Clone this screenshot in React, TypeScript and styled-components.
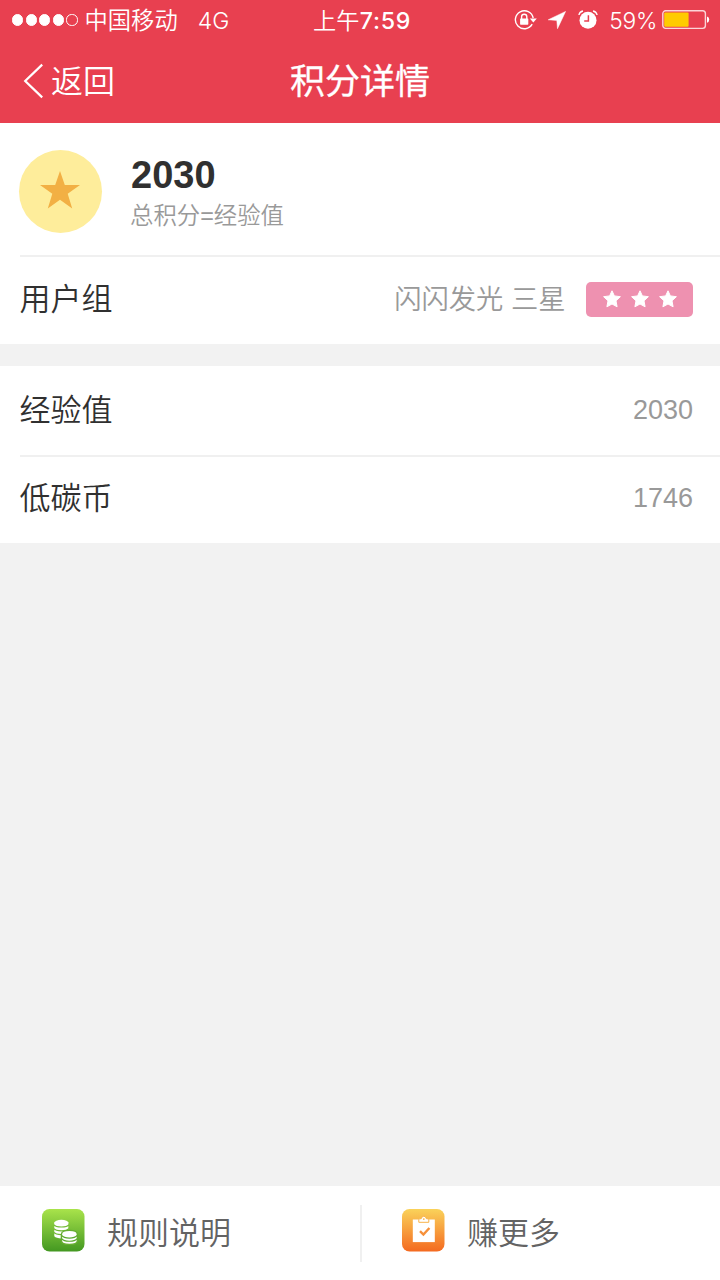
import React from 'react';
import styled, { createGlobalStyle } from 'styled-components';

const GlobalStyle = createGlobalStyle`
  * { box-sizing: border-box; }
  body {
    margin: 0;
    background: #f2f2f2;
    font-family: "Liberation Sans", "Noto Sans CJK SC", sans-serif;
  }
`;

const Screen = styled.main`
  display: flex;
  flex-direction: column;
  width: 720px;
  height: 1280px;
  background: #f2f2f2;
  overflow: hidden;
`;

const Header = styled.header`
  height: 123px;
  background: #e84050;
  color: #fff;
`;

const StatusBar = styled.div`
  display: grid;
  grid-template-columns: 1fr auto 1fr;
  align-items: center;
  height: 40px;
  padding: 0 10px 0 12px;
  font-family: Inter, "Noto Sans CJK SC", sans-serif;
  font-size: 22px;
  line-height: 38px;
`;

const Carrier = styled.div`
  display: flex;
  align-items: center;
  font-weight: 350;
`;

const Signal = styled.div`
  display: flex;
  flex: none;
  gap: 2.4px;
  margin-right: 7px;
`;

const Dot = styled.i<{ $empty?: boolean }>`
  flex: none;
  width: 11.2px;
  height: 11.2px;
  border: 1px solid #fff;
  border-radius: 50%;
  background: ${p => (p.$empty ? 'transparent' : '#fff')};
`;

const CarrierName = styled.span`
  font-size: 23.3px;
  margin-right: 20px;
  padding-top: 1px;
`;

const Network = styled.span`
  font-size: 23px;
  font-weight: 350;
  padding-top: 1px;
`;

const Clock = styled.time`
  display: flex;
  padding: 1px 0 0 2px;
  font-size: 23.2px;
  font-weight: 500;
  letter-spacing: 0.7px;
`;

const Meridiem = styled.span`
  font-weight: 350;
  letter-spacing: 0.2px;
`;

const Indicators = styled.div`
  display: flex;
  align-items: center;
  justify-content: flex-end;
`;

const Percent = styled.span`
  margin: 0 5px 0 11px;
  padding-top: 1px;
  font-size: 22.8px;
  font-weight: 350;
  letter-spacing: -0.3px;
`;

const NavBar = styled.nav`
  display: grid;
  grid-template-columns: 1fr auto 1fr;
  align-items: center;
  height: 82px;
  padding: 0 23px;
`;

const BackButton = styled.a`
  display: flex;
  align-items: center;
  gap: 7px;
  font-size: 32px;
  font-weight: 350;
  line-height: 40px;
`;

const BackText = styled.span`
  padding-top: 2px;
`;

const Title = styled.h1`
  margin: 0;
  padding-top: 2px;
  font-size: 35px;
  font-weight: 400;
  line-height: 40px;
  -webkit-text-stroke: 0.3px #fff;
`;

const Card = styled.section`
  padding-left: 20px;
  background: #fff;
  & + & { margin-top: 22px; }
`;

const Summary = styled.div`
  display: flex;
  align-items: center;
  gap: 29px;
  height: 134px;
  padding-top: 4px;
  border-bottom: 2px solid #f0f0f0;
`;

const Medal = styled.div`
  display: flex;
  align-items: center;
  justify-content: center;
  width: 83px;
  height: 83px;
  margin-left: -1px;
  padding: 0 0.5px 3px 0;
  border-radius: 50%;
  background: #feed9b;
`;

const Figures = styled.div`
  padding-top: 9px;
`;

const Total = styled.strong`
  display: block;
  color: #303030;
  font-size: 38px;
  line-height: 42px;
`;

const Caption = styled.div`
  margin-left: -1px;
  color: #999;
  font-size: 23.4px;
  font-weight: 350;
  line-height: 41px;
`;

const Row = styled.div<{ $height: number; $lift: number; $divided?: boolean }>`
  display: flex;
  align-items: center;
  justify-content: space-between;
  height: ${p => p.$height}px;
  padding: 0 27px ${p => p.$lift}px 0;
  border-bottom: ${p => (p.$divided ? '2px solid #f0f0f0' : 'none')};
`;

const Label = styled.span`
  margin-left: -0.5px;
  padding-top: 2px;
  color: #303030;
  font-size: 31px;
  font-weight: 350;
  line-height: 40px;
`;

const Value = styled.span`
  color: #999;
  font-size: 27px;
  font-weight: 350;
  line-height: 40px;
`;

const GroupName = styled(Value)`
  padding-top: 1px;
  font-size: 27.3px;
`;

const Group = styled.div`
  display: flex;
  align-items: center;
  gap: 20px;
`;

const Level = styled.div`
  display: flex;
  align-items: center;
  justify-content: center;
  gap: 8px;
  width: 107.5px;
  height: 35px;
  padding-left: 1px;
  border-radius: 5px;
  background: #ee91b0;
`;

const Footer = styled.footer`
  display: flex;
  height: 94px;
  margin-top: auto;
  background: #fff;
`;

const Action = styled.a`
  display: flex;
  flex: 1;
  align-items: center;
  gap: 22px;
  padding: 0 0 6px 42px;
  color: #636363;
  font-size: 31px;
  font-weight: 350;
  line-height: 40px;
`;

const ActionText = styled.span`
  padding-top: 8px;
`;

const Divider = styled.div`
  width: 2px;
  height: 57px;
  margin: 19px -2px 0 0;
  background: #f0f0f0;
`;

const Star = ({ size, color }: { size: number; color: string }) => (
  <svg width={size} height={size} viewBox="0 0 40 40" fill={color}>
    <path d="M20 1l4.8 14H40L27.7 23.8 32.2 38.5 20 29.8 7.8 38.5l4.5-14.7L0 15h15.2z" />
  </svg>
);

const RoundStar = () => (
  <svg width="20" height="20" viewBox="0 0 20 20" fill="#fff" stroke="#fff" strokeWidth="1" strokeLinejoin="round">
    <path d="M10 1.8l2.4 5.1 6 .8-4.4 4.1 1.1 6L10 15l-5.1 2.8 1.1-6-4.4-4.1 6-.8z" />
  </svg>
);

const RotationLock = () => (
  <svg width="24" height="20" viewBox="0 0 24 20" fill="none" stroke="#fff">
    <path d="M18.2 14.2A9 9 0 1 1 19.2 8" strokeWidth="1.4" />
    <path d="M15.8 8.6h7l-3.5 4z" fill="#fff" stroke="none" />
    <path d="M7.6 9V6.8a2.6 2.6 0 0 1 5.2 0V9" strokeWidth="1.4" />
    <rect x="6.1" y="8.5" width="8.2" height="6.2" rx=".6" fill="#fff" stroke="none" />
  </svg>
);

const LocationIcon = styled.svg`
  margin-left: 10px;
`;

const LocationArrow = () => (
  <LocationIcon width="18" height="18" viewBox="0 0 18 18" fill="#fff">
    <path d="M17.6.4L.2 8.8l8.6.6.7 8.3z" stroke="#fff" strokeWidth=".5" />
  </LocationIcon>
);

const AlarmIcon = styled.svg`
  margin-left: 12px;
`;

const Alarm = () => (
  <AlarmIcon width="20" height="20" viewBox="0 0 20 20" fill="none" stroke="#fff">
    <circle cx="10" cy="10.3" r="8.5" fill="#fff" stroke="none" />
    <path d="M.9 5Q1.5 1.8 5 1M19.1 5Q18.5 1.8 15 1" strokeWidth="1.3" />
    <path d="M10.4 5.2v5.7H6.2" stroke="#e84050" strokeWidth="1.5" />
  </AlarmIcon>
);

const Battery = () => (
  <svg width="48" height="20" viewBox="0 0 48 20" fill="none">
    <rect x=".8" y=".8" width="42.6" height="17.6" rx="2.8" stroke="#fbd5d8" strokeWidth="1.4" />
    <rect x="2.2" y="2.4" width="24.4" height="14.4" rx="1" fill="#ffcb00" />
    <path d="M45 6.5q2.2.5 2.2 3.1T45 12.8z" fill="#fff" />
  </svg>
);

const BackArrow = () => (
  <svg width="21" height="36" viewBox="0 0 21 36" fill="none" stroke="#fff" strokeWidth="2.2">
    <path d="M19.2 1.6L2.2 18l17 16.4" />
  </svg>
);

const CoinsIcon = () => (
  <svg width="43" height="43" viewBox="0 0 43 43">
    <defs>
      <linearGradient id="green" x2="0" y2="1">
        <stop stopColor="#a9e34b" />
        <stop offset="1" stopColor="#439821" />
      </linearGradient>
    </defs>
    <rect width="42.5" height="42.5" rx="7.5" fill="url(#green)" />
    <path d="M12.3 13.5v13.8q2 2.1 7.2 2.1 6.8 0 6.8-2.1V13.5z" fill="#fff" />
    <ellipse cx="19.4" cy="13.8" rx="7.1" ry="3" fill="#fff" />
    <path d="M12 15.8q1.5 2.2 7.4 2.2t7.4-2.2M12 19.6q1.5 2.2 7.4 2.2t7.4-2.2M12 23.4q1.5 2.2 7.4 2.2t7.4-2.2" fill="none" stroke="#72ba35" strokeWidth="1.2" />
    <path d="M19.4 25.4q0-4 8-4t8 4v6q0 4-8 4t-8-4z" fill="#fff" stroke="#66ad31" strokeWidth="1.4" />
    <path d="M19.6 26.4q2 2.7 7.8 2.7t7.8-2.7M19.6 29.6q2 2.7 7.8 2.7t7.8-2.7" fill="none" stroke="#5ba92d" strokeWidth="1.1" />
  </svg>
);

const TaskIcon = () => (
  <svg width="43" height="43" viewBox="0 0 43 43">
    <defs>
      <linearGradient id="orange" x2="0" y2="1">
        <stop stopColor="#fad25a" />
        <stop offset="1" stopColor="#f46a20" />
      </linearGradient>
    </defs>
    <rect width="42.5" height="42.5" rx="7.5" fill="url(#orange)" />
    <rect x="10.8" y="10.5" width="22" height="22.6" fill="#fff" />
    <path d="M16.8 13.3v-2.6q.2-1.1 2.5-1.1.4-2.4 2.5-2.4t2.5 2.4q2.3 0 2.5 1.1v2.6z" fill="#fff" stroke="#f8b34a" strokeWidth="1" />
    <circle cx="21.8" cy="10.1" r=".9" fill="#f8b34a" />
    <path d="M18 22.2l3.4 3.3 6-6.5" fill="none" stroke="#f6903a" strokeWidth="2.4" />
  </svg>
);

export default function App() {
  return (
    <Screen>
      <GlobalStyle />
      <Header>
        <StatusBar>
          <Carrier>
            <Signal>
              <Dot /><Dot /><Dot /><Dot /><Dot $empty />
            </Signal>
            <CarrierName>中国移动</CarrierName>
            <Network>4G</Network>
          </Carrier>
          <Clock><Meridiem>上午</Meridiem>7:59</Clock>
          <Indicators>
            <RotationLock />
            <LocationArrow />
            <Alarm />
            <Percent>59%</Percent>
            <Battery />
          </Indicators>
        </StatusBar>
        <NavBar>
          <BackButton><BackArrow /><BackText>返回</BackText></BackButton>
          <Title>积分详情</Title>
        </NavBar>
      </Header>
      <Card>
        <Summary>
          <Medal><Star size={40} color="#f2b044" /></Medal>
          <Figures>
            <Total>2030</Total>
            <Caption>总积分=经验值</Caption>
          </Figures>
        </Summary>
        <Row $height={87} $lift={3}>
          <Label>用户组</Label>
          <Group>
            <GroupName>闪闪发光 三星</GroupName>
            <Level><RoundStar /><RoundStar /><RoundStar /></Level>
          </Group>
        </Row>
      </Card>
      <Card>
        <Row $height={91} $lift={1} $divided>
          <Label>经验值</Label>
          <Value>2030</Value>
        </Row>
        <Row $height={86} $lift={4}>
          <Label>低碳币</Label>
          <Value>1746</Value>
        </Row>
      </Card>
      <Footer>
        <Action><CoinsIcon /><ActionText>规则说明</ActionText></Action>
        <Divider />
        <Action><TaskIcon /><ActionText>赚更多</ActionText></Action>
      </Footer>
    </Screen>
  );
}
